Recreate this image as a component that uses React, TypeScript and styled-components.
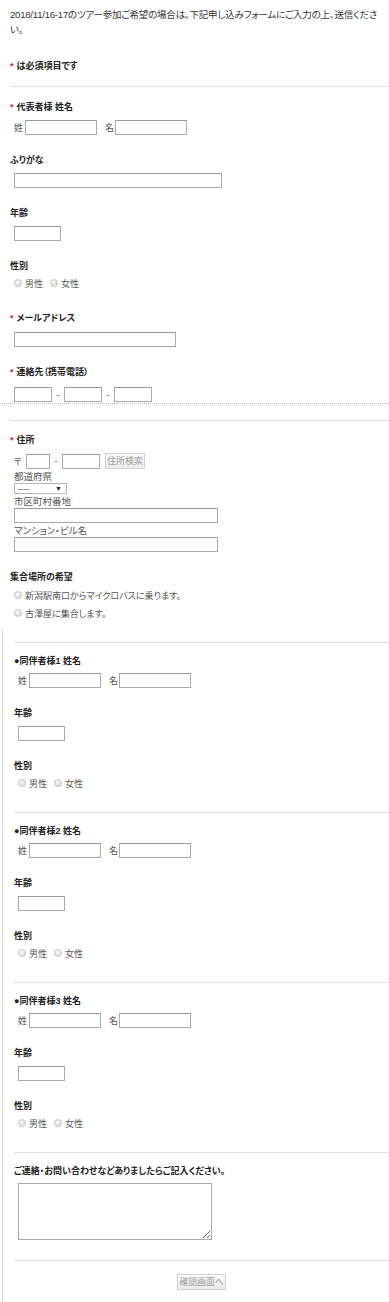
import React from 'react'
import styled, { createGlobalStyle } from 'styled-components'

const GlobalStyle = createGlobalStyle`
  body {
    margin: 0;
    background: #fff;
    font-family: "Liberation Sans", "Noto Sans CJK JP", sans-serif;
    font-size: 9px;
    color: #333;
    font-feature-settings: "palt";
  }
`

const Page = styled.div`
  width: 389px;
  overflow: hidden;
`

const Upper = styled.div`
  padding: 7px 0 0 10px;
  border-bottom: 1px dotted #bdbdbd;
`

const Intro = styled.p`
  margin: 0 0 23px 0;
  line-height: 15px;
  font-size: 9.5px;
  letter-spacing: -0.2px;
  color: #333;
`

const Rule = styled.div<{ $after?: number }>`
  height: 1px;
  background: #dedede;
  margin-bottom: ${p => p.$after ?? 12}px;
`

const Note = styled.div`
  height: 12px;
  line-height: 12px;
  font-weight: bold;
  color: #222;
  margin-bottom: 14px;
`

const Req = styled.span`
  color: #d4262b;
  margin-right: 3px;
`

const Field = styled.div<{ $after?: number }>`
  margin-bottom: ${p => (p.$after ?? 19)}px;
`

const Label = styled.div<{ $gap?: number }>`
  height: 12px;
  line-height: 12px;
  font-weight: bold;
  color: #222;
  white-space: nowrap;
  margin-bottom: ${p => (p.$gap ?? 7)}px;
`

const Controls = styled.div`
  padding-left: 4px;
`

const Row = styled.div<{ $h?: number }>`
  display: flex;
  align-items: center;
  height: ${p => p.$h ?? 15}px;
  color: #555;
`

const Unit = styled.span<{ $w?: number; $lead?: number }>`
  display: inline-block;
  width: ${p => p.$w ?? 11}px;
  margin-left: ${p => p.$lead ?? 0}px;
`

const Dash = styled.span`
  display: inline-block;
  width: 12px;
  text-align: center;
  color: #555;
`

const TextInput = styled.input.attrs({ type: 'text' })<{ $w: number }>`
  box-sizing: border-box;
  display: block;
  width: ${p => p.$w}px;
  height: 15px;
  margin: 0;
  padding: 0 2px;
  border: 1px solid #a9a9a9;
  border-top-color: #9a9a9a;
  background: #fff;
  font: inherit;
  outline: none;
`

const GrayButton = styled.button`
  box-sizing: border-box;
  height: 16px;
  padding: 0 1px;
  border: 1px solid #cfcfcf;
  background: linear-gradient(#fafafa, #ececec);
  color: #9a9a9a;
  font: inherit;
  font-size: 9px;
  line-height: 14px;
  white-space: nowrap;
`

const SearchButton = styled(GrayButton)`
  width: 40px;
  margin-left: 5px;
`

const SubLabel = styled.div`
  height: 12px;
  line-height: 12px;
  margin-top: 2px;
  color: #555;
  font-size: 9.5px;
`

const SelectBox = styled.div`
  box-sizing: border-box;
  width: 53px;
  height: 11px;
  border: 1px solid #b5b5b5;
  display: flex;
  align-items: center;
  justify-content: space-between;
  padding: 0 4px 0 3px;
  font-size: 7px;
  line-height: 9px;
  color: #222;
`

const RadioRow = styled.div<{ $gap?: number }>`
  display: flex;
  align-items: center;
  height: 12px;
  color: #555;
  margin-bottom: ${p => p.$gap ?? 0}px;
`

const RadioItem = styled.label`
  display: inline-flex;
  align-items: center;
  margin-right: 7px;
`

const Radio = styled.input.attrs({ type: 'radio' })`
  appearance: none;
  box-sizing: border-box;
  width: 8px;
  height: 8px;
  margin: 0 3px 0 0;
  border-radius: 50%;
  border: 1px solid #c6c6c6;
  background: radial-gradient(circle at 40% 35%, #fbfbfb, #d4d4d4);
`

const Lower = styled.div`
  padding: 16px 0 10px 10px;
`

const Companions = styled.div`
  margin-left: 2px;
  border-left: 1px solid #d6d6d6;
  padding: 13px 0 13px 11px;
`

const Message = styled.textarea`
  box-sizing: border-box;
  display: block;
  width: 194px;
  height: 57px;
  margin: 0;
  border: 1px solid #a9a9a9;
  font: inherit;
`

const SubmitRow = styled.div`
  display: flex;
  justify-content: center;
  padding-top: 1px;
`

const SubmitButton = styled(GrayButton)`
  min-width: 45px;
  letter-spacing: -0.2px;
`

const Gender = () => (
  <RadioRow>
    <RadioItem><Radio name="g" />男性</RadioItem>
    <RadioItem><Radio name="g" />女性</RadioItem>
  </RadioRow>
)

const NameRow = () => (
  <Row>
    <Unit>姓</Unit>
    <TextInput $w={72} />
    <Unit $w={10} $lead={8}>名</Unit>
    <TextInput $w={72} />
  </Row>
)

const Companion = ({ n }: { n: number }) => (
  <>
    <Rule />
    <Field>
      <Label $gap={6}>●同伴者様{n} 姓名</Label>
      <Controls><NameRow /></Controls>
    </Field>
    <Field>
      <Label>年齢</Label>
      <Controls><TextInput $w={47} /></Controls>
    </Field>
    <Field $after={23}>
      <Label $gap={5}>性別</Label>
      <Controls><Gender /></Controls>
    </Field>
  </>
)

export default function App() {
  return (
    <Page>
      <GlobalStyle />
      <Upper>
        <Intro>2018/11/16-17のツアー参加ご希望の場合は、下記申し込みフォームにご入力の上、送信ください。</Intro>
        <Note><Req>*</Req>は必須項目です</Note>
        <Rule $after={14} />
        <Field>
          <Label><Req>*</Req>代表者様 姓名</Label>
          <Controls><NameRow /></Controls>
        </Field>
        <Field>
          <Label>ふりがな</Label>
          <Controls><TextInput $w={208} /></Controls>
        </Field>
        <Field>
          <Label>年齢</Label>
          <Controls><TextInput $w={47} /></Controls>
        </Field>
        <Field $after={23}>
          <Label $gap={5}>性別</Label>
          <Controls><Gender /></Controls>
        </Field>
        <Field>
          <Label $gap={8}><Req>*</Req>メールアドレス</Label>
          <Controls><TextInput $w={162} /></Controls>
        </Field>
        <Field $after={1}>
          <Label $gap={9}><Req>*</Req>連絡先（携帯電話）</Label>
          <Controls>
            <Row>
              <TextInput $w={38} />
              <Dash>-</Dash>
              <TextInput $w={38} />
              <Dash>-</Dash>
              <TextInput $w={38} />
            </Row>
          </Controls>
        </Field>
      </Upper>
      <Lower>
        <Rule $after={13} />
        <Field>
          <Label><Req>*</Req>住所</Label>
          <Controls>
            <Row $h={16}>
              <Unit $w={12}>〒</Unit>
              <TextInput $w={24} />
              <Dash>-</Dash>
              <TextInput $w={38} />
              <SearchButton>住所検索</SearchButton>
            </Row>
            <SubLabel>都道府県</SubLabel>
            <SelectBox><span>-----</span><span>▼</span></SelectBox>
            <SubLabel>市区町村番地</SubLabel>
            <TextInput $w={204} />
            <SubLabel>マンション・ビル名</SubLabel>
            <TextInput $w={204} />
          </Controls>
        </Field>
        <Field $after={0}>
          <Label $gap={6}>集合場所の希望</Label>
          <Controls>
            <RadioRow $gap={6}><RadioItem><Radio name="p" />新潟駅南口からマイクロバスに乗ります。</RadioItem></RadioRow>
            <RadioRow><RadioItem><Radio name="p" />古澤屋に集合します。</RadioItem></RadioRow>
          </Controls>
        </Field>
      </Lower>
      <Companions>
        {[1, 2, 3].map(n => <Companion key={n} n={n} />)}
        <Rule />
        <Field $after={20}>
          <Label $gap={6}>ご連絡・お問い合わせなどありましたらご記入ください。</Label>
          <Controls><Message /></Controls>
        </Field>
        <Rule />
        <SubmitRow><SubmitButton>確認画面へ</SubmitButton></SubmitRow>
      </Companions>
    </Page>
  )
}
